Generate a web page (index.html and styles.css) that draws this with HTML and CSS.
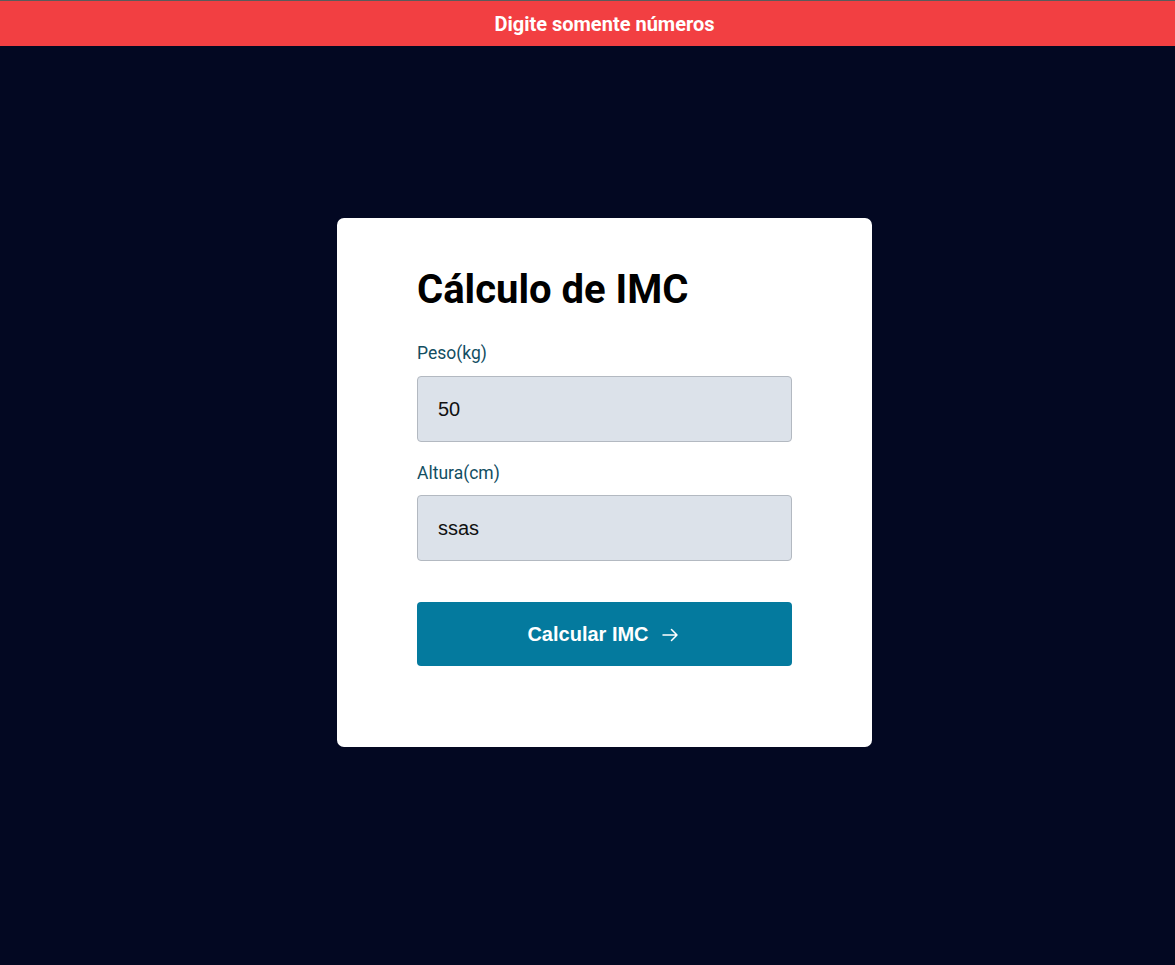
FILE: index.html
```html
<!DOCTYPE html>
<html lang="pt-BR">
<head>
<meta charset="utf-8">
<title>Cálculo de IMC</title>
<link rel="stylesheet" href="styles.css">
</head>
<body>
<div class="toast">Digite somente números</div>
<main class="page">
  <form class="card">
    <h1 class="title">Cálculo de IMC</h1>
    <label class="label" for="peso">Peso(kg)</label>
    <input class="input" id="peso" type="text" value="50">
    <label class="label label-second" for="altura">Altura(cm)</label>
    <input class="input" id="altura" type="text" value="ssas">
    <button class="button" type="button">
      <span>Calcular IMC</span>
      <svg class="arrow" width="16" height="14" viewBox="0 0 16 14" fill="none" stroke="currentColor" stroke-width="1.5" stroke-linecap="round" stroke-linejoin="round"><path d="M1 7h14M9.5 1.5L15 7l-5.5 5.5"/></svg>
    </button>
  </form>
</main>
</body>
</html>
```

FILE: styles.css
```css
* { box-sizing: border-box; }
html, body { margin: 0; padding: 0; height: 100%; }
body {
  background: #030822;
  font-family: Roboto, "Liberation Sans", Arial, sans-serif;
}
.toast {
  position: fixed;
  top: 0;
  left: 0;
  right: 0;
  height: 46px;
  border-top: 1px solid #5b5b5b;
  background: #f23f42;
  color: #fff;
  font-family: Roboto, sans-serif;
  font-weight: 700;
  font-size: 20px;
  display: flex;
  align-items: center;
  justify-content: center;
  padding-left: 34px;
  z-index: 10;
}
.page {
  min-height: 100%;
  display: flex;
  align-items: center;
  justify-content: center;
  padding-left: 34px;
}
.card {
  width: 535px;
  background: #fff;
  border-radius: 7px;
  padding: 48px 80px 81px;
  display: flex;
  flex-direction: column;
}
.title {
  margin: 0 0 30px;
  font-family: Roboto, sans-serif;
  font-weight: 700;
  font-size: 40px;
  line-height: 47px;
  color: #000;
}
.label {
  font-family: Roboto, sans-serif;
  font-size: 17.5px;
  line-height: 20px;
  color: #124e62;
  margin-bottom: 13px;
}
.label-second { margin-top: 21px; margin-bottom: 12px; }
.input {
  height: 66px;
  width: 100%;
  background: #dce2ea;
  border: 1px solid #b3b9c1;
  border-radius: 4px;
  padding: 0 20px;
  font-family: "Liberation Sans", Arial, sans-serif;
  font-size: 20px;
  color: #111;
  outline: none;
}
.button {
  margin-top: 41px;
  height: 64px;
  width: 100%;
  background: #047a9e;
  border: none;
  border-radius: 4px;
  color: #fff;
  font-family: "Liberation Sans", Arial, sans-serif;
  font-weight: 700;
  font-size: 20px;
  display: flex;
  align-items: center;
  justify-content: center;
  gap: 13px;
  padding: 0 4px 0 0;
  cursor: pointer;
}
.arrow { display: block; margin-top: 2px; }
```
